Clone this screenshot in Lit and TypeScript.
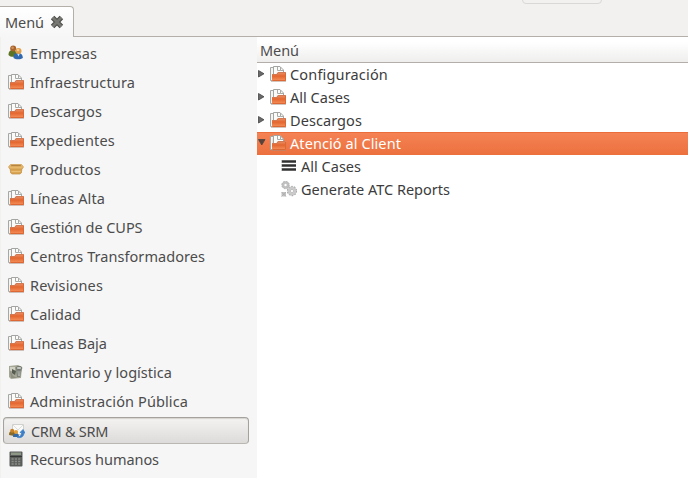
import { LitElement, html, css, svg, nothing } from "lit";
import { customElement, property } from "lit/decorators.js";
import { classMap } from "lit/directives/class-map.js";

const icons: Record<string, unknown> = {
  folder: svg`
    <path d="M2.500 14.500H.5V1.500H3" fill="#f4f4f3" stroke="#a6a8a6"/>
    <path d="M3.500 13.500V.5H10l3.500 3.500v9.500z" fill="#fbfbfa" stroke="#a2a5a2"/>
    <path d="M7.500 1v3.500h3M10.500 1v3.500h3" fill="none" stroke="#a9aba8"/>
    <path d="M2 15V8h4.500L8 6h8v9z" fill="url(#f)"/>
    <path d="M2.500 8.500h4.200l1.500-2h7.300" fill="none" stroke="#cf7a55"/>
    <path d="M2.500 14.500h13V7" fill="none" stroke="#dc6836"/>
    <path d="M1 15.500h15" stroke="#a88c7c" opacity=".5"/>`,
  people: svg`
    <path d="M.5 10c0-4 2-5 4.500-5S9 7 9 11c-3 1.500-7 1-8.500-1z" fill="#5d7424"/>
    <circle cx="5.200" cy="3.600" r="3" fill="#a8622c"/><circle cx="4.600" cy="2.800" r="1.300" fill="#d09258"/>
    <path d="M5.500 13c0-4 1.500-5 4.500-5s4.800 1.500 4.800 5c-2 1.800-7.300 1.800-9.300 0z" fill="#3168ae"/>
    <circle cx="10.500" cy="6" r="3" fill="#e2a04c"/><circle cx="10" cy="5" r="1.300" fill="#f4cb88"/>
    <path d="M9.300 9l1.200 2.500L11.700 9z" fill="#cbdff1"/>`,
  box: svg`
    <path d="M2 7h12l-.7 5-1.300 1H4l-1.300-1z" fill="#dba654" stroke="#c08c40" stroke-width=".7"/>
    <path d="M.5 6L2.500 3.500h11l2 2.500-1.500 2H2z" fill="#e8b86a" stroke="#c8954a" stroke-width=".7"/>
    <path d="M3.500 4.100h9l.8 1.200H2.700z" fill="#b48443"/>
    <path d="M3.500 10.500h9" stroke="#e9bf76"/>`,
  stock: svg`
    <path d="M1 2l9-1 4 2-1 11-10 1-2-2z" fill="#a5a695"/>
    <path d="M2 3h5v4H2z" fill="#d0d0c3"/><path d="M2 6l3 6 4 2H3z" fill="#8d8f80"/>
    <path d="M4 5l4 2-1 4-3-2z" fill="#565c50"/>
    <path d="M8 5l6-1-2 9H9z" fill="#7c8179"/><ellipse cx="11" cy="4" rx="3" ry="1.500" fill="#cbcfc8" stroke="#70756d"/>
    <path d="M10 7l.5 5M12 7l-.5 5" stroke="#b7bbb4" stroke-width=".8"/>`,
  crm: svg`
    <path d="M3.500 1.500h11v10h-11z" fill="#fafaf9" stroke="#d0d0cc"/>
    <path d="M4 2l5 5 5-5" fill="none" stroke="#dededa"/>
    <path d="M0 12c0-3 1-4 3-4s4 1 4 4l-2 1z" fill="#8c6a23"/><circle cx="3.200" cy="7.700" r="2" fill="#c98128"/>
    <path d="M4 14c0-3 1-4 3-4s3 1.500 3 4z" fill="#3569a4"/><circle cx="7" cy="9" r="2.100" fill="#e39e38"/>
    <path d="M8.500 13.500c3 .5 4-1 4-4H11l3-3 2 3.500h-1.200c0 4-3 5-6.300 4.500z" fill="#3c7fc8" stroke="#3c7fc8" stroke-width=".8"/>`,
  calc: svg`
    <rect x="1.500" y=".5" width="13" height="15" rx="1" fill="#5b5d5a"/>
    <path d="M3 1.500h10v2.500H3z" fill="#8e9686"/><path d="M2 5.500h12" stroke="#343634"/>
    <path d="M3.500 8h9M3.500 10.500h9M3.500 13h9" stroke="#8a8c88" stroke-width="1.300" stroke-dasharray="2.200 1.100"/>`,
  list: svg`<path d="M.5 3.500h14.500M.5 7.500h14.500M.5 11.500h14.500" stroke="#9a9a9a" stroke-width="3"/>
    <path d="M1 3.500h14M1 7.500h14M1 11.500h14" stroke="#303030" stroke-width="1.800"/>`,
  gears: svg`
    <circle cx="4.500" cy="4" r="2.500" fill="none" stroke="#c0c0c0" stroke-width="2.600"/>
    <circle cx="4.500" cy="4" r="3.700" fill="none" stroke="#b0b0b0" stroke-width="1" stroke-dasharray="1.600 1.300"/>
    <circle cx="11" cy="10" r="3.200" fill="none" stroke="#cacaca" stroke-width="2.800"/>
    <circle cx="11" cy="10" r="4.600" fill="none" stroke="#acacac" stroke-width="1.100" stroke-dasharray="1.600 1.300"/>
    <circle cx="11" cy="10" r="1.600" fill="#fff" stroke="#aaa" stroke-width=".7"/>
    <path d="M.5 11h4.500v4.500H.5z" fill="#c2c2c2"/><path d="M.5 11L5 15.500M5 11L.5 15.500" stroke="#aaa" stroke-width=".7"/>`,
};

@customElement("ui-icon")
class UiIcon extends LitElement {
  @property() name = "folder";
  static styles = css`
    :host { display: block; width: 16px; height: 16px; flex: none; }
    svg { display: block; }
  `;
  render() {
    return html`<svg width="16" height="16" viewBox="0 0 16 16">
      <defs><linearGradient id="f" x1="0" y1="0" x2="0" y2="1">
        <stop offset="0" stop-color="#e8956e"/><stop offset=".45" stop-color="#e3662f"/><stop offset="1" stop-color="#f6935f"/>
      </linearGradient></defs>${icons[this.name]}</svg>`;
  }
}

/* Text set to a given advance width by even tracking. */
@customElement("fit-label")
class FitLabel extends LitElement {
  @property() text = "";
  @property({ type: Number }) width = 0;
  static styles = css`
    :host { display: block; white-space: nowrap; line-height: 20px; }
    span { display: inline-block; }
  `;
  render() { return html`<span>${this.text}</span>`; }
  firstUpdated() {
    const s = this.renderRoot.querySelector("span")!;
    const natural = s.getBoundingClientRect().width;
    s.style.letterSpacing = `${(this.width - natural) / this.text.length}px`;
  }
}

type Item = { icon: string; text: string; w: number; on?: boolean };
const side: Item[] = [
  { icon: "people", text: "Empresas", w: 67 },
  { icon: "folder", text: "Infraestructura", w: 105 },
  { icon: "folder", text: "Descargos", w: 72 },
  { icon: "folder", text: "Expedientes", w: 85 },
  { icon: "box", text: "Productos", w: 71 },
  { icon: "folder", text: "Líneas Alta", w: 75 },
  { icon: "folder", text: "Gestión de CUPS", w: 112.5 },
  { icon: "folder", text: "Centros Transformadores", w: 175 },
  { icon: "folder", text: "Revisiones", w: 73 },
  { icon: "folder", text: "Calidad", w: 51 },
  { icon: "folder", text: "Líneas Baja", w: 77 },
  { icon: "stock", text: "Inventario y logística", w: 142 },
  { icon: "folder", text: "Administración Pública", w: 158 },
  { icon: "crm", text: "CRM & SRM", w: 77, on: true },
  { icon: "calc", text: "Recursos humanos", w: 129 },
];
type Node = { icon: string; text: string; w: number; kind: "closed" | "open" | "leaf" };
const tree: Node[] = [
  { icon: "folder", text: "Configuración", w: 98, kind: "closed" },
  { icon: "folder", text: "All Cases", w: 60, kind: "closed" },
  { icon: "folder", text: "Descargos", w: 72, kind: "closed" },
  { icon: "folder", text: "Atenció al Client", w: 111, kind: "open" },
  { icon: "list", text: "All Cases", w: 60, kind: "leaf" },
  { icon: "gears", text: "Generate ATC Reports", w: 149, kind: "leaf" },
];

@customElement("app-root")
class AppRoot extends LitElement {
  static styles = css`
    * { box-sizing: border-box; }
    :host { display: flex; flex-direction: column; position: relative; width: 688px; height: 478px; overflow: hidden;
      background: #f2f1f0; color: #4c4c4c; font: 14.500px/20px "Noto Sans", "Open Sans", sans-serif; }
    .stub { position: absolute; left: 522px; top: -20px; width: 80px; height: 24px; border: 1px solid #dad8d6; border-radius: 4px; }
    .tabs { height: 37px; flex: none; display: flex; align-items: flex-end; }
    .tab { width: 74px; height: 31px; border: 1px solid #b4afa8; border-width: 1px 1px 0 0; border-radius: 0 4px 0 0;
      background: linear-gradient(#fff, #f6f6f6); display: flex; align-items: center; gap: 6px; padding: 0 0 1px 5px; }
    .rest { flex: 1; align-self: stretch; border-bottom: 1px solid #b4afa8; }
    .x { width: 14px; height: 14px; }
    .body { flex: 1; display: flex; min-height: 0; }
    .side { width: 256px; margin-left: 1px; background: #f6f6f6; padding-top: 1px; }
    .item { height: 29px; display: flex; align-items: center; gap: 6px; padding-left: 7px; }
    .item.on { margin: 2px 8px 0 2px; width: 246px; height: 27px; border: 1px solid #a5a29e; border-bottom-color: #bab7b3; border-radius: 4px;
      padding-left: 5px; background: linear-gradient(#f4f3f2, #dddbd9); box-shadow: inset 0 1px 1px #d5d3d0; }
    .main { flex: 1; background: #fff; color: #3c3c3c; }
    .head { height: 26px; display: flex; align-items: center; padding: 1px 0 0 3px; border-bottom: 1px solid #b3aeaa;
      background: linear-gradient(#fff 20%, #efeeed); color: #4c4c4c; }
    .row { height: 23px; display: flex; align-items: center; }
    .row ui-icon { margin-bottom: 1px; }
    .row.open { background: linear-gradient(#f58355, #ec703e); box-shadow: inset 0 1px #ea6d3b; color: #fff; }
    .arrow { width: 13px; height: 16px; flex: none; }
    .open .arrow { margin-bottom: 2px; }
    .row fit-label { margin: 0 0 1px 4px; }
    .leaf { padding-left: 24px; }
  `;
  render() {
    return html`
      <div class="stub"></div>
      <div class="tabs">
        <div class="tab"><fit-label text="Menú" width="39"></fit-label>
          <svg class="x" viewBox="0 0 14 14"><path d="M2.600 2.600l8.800 8.800M11.400 2.600l-8.800 8.800" stroke="#4c4c49" stroke-width="5"/><path d="M2.600 2.600l8.800 8.800M11.400 2.600l-8.800 8.800" stroke="#777773" stroke-width="2.800"/></svg></div>
        <div class="rest"></div>
      </div>
      <div class="body">
        <div class="side">${side.map((i) => html`<div class=${classMap({ item: true, on: !!i.on })}>
          <ui-icon name=${i.icon}></ui-icon><fit-label text=${i.text} width=${i.w}></fit-label></div>`)}</div>
        <div class="main">
          <div class="head"><fit-label text="Menú" width="39"></fit-label></div>
          ${tree.map((n) => html`<div class="row ${n.kind}">
            ${n.kind === "leaf" ? nothing : html`<svg class="arrow" viewBox="0 0 13 16">
              <path d=${n.kind === "open" ? "M1.500 4.500h6.500l-3.250 5.500z" : "M1.500 3.500v6.500l5.500-3.250z"} fill=${n.kind === "open" ? "#5a4238" : "#6a6a6a"} stroke="#444" stroke-width=".8"/></svg>`}
            <ui-icon name=${n.icon}></ui-icon><fit-label text=${n.text} width=${n.w}></fit-label></div>`)}
        </div>
      </div>`;
  }
}
